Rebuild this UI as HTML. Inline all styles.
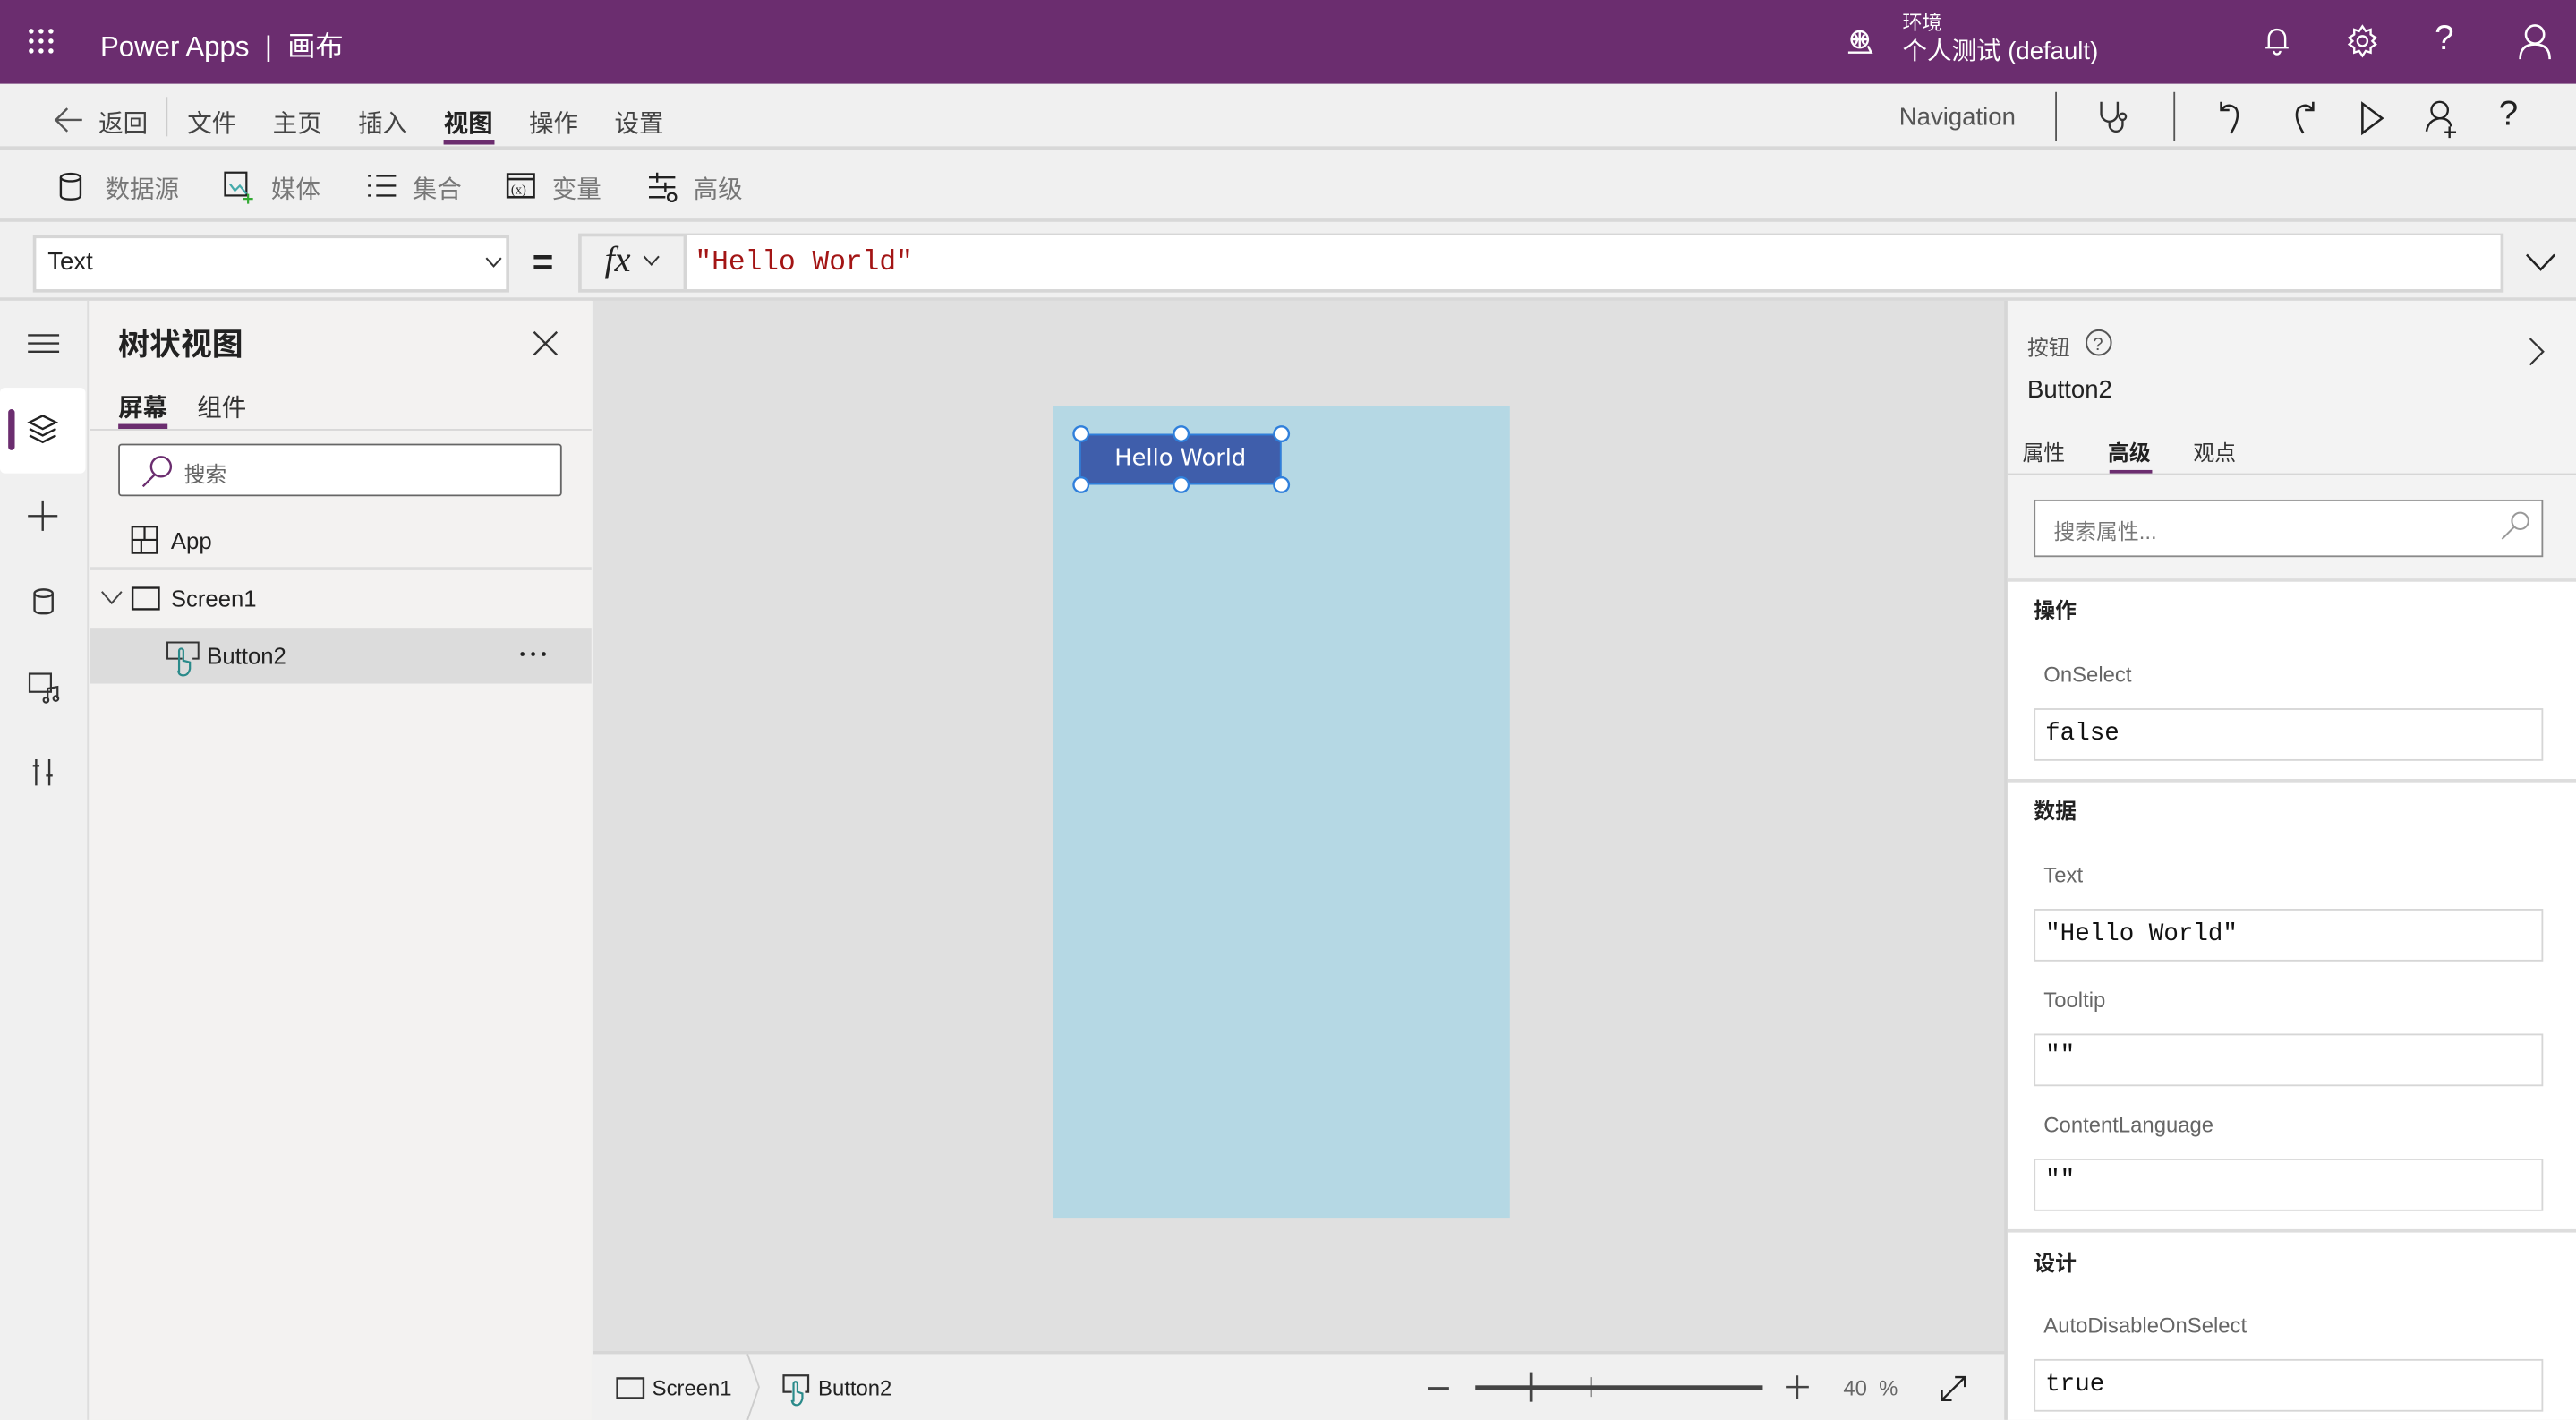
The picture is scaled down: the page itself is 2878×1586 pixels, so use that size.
<!DOCTYPE html>
<html><head><meta charset="utf-8"><style>
*{box-sizing:border-box;margin:0;padding:0}
html,body{width:2878px;height:1586px;overflow:hidden;background:#f0f0f0}
#w{position:absolute;left:0;top:0;width:1568px;height:864px;transform:scale(1.83546);transform-origin:0 0;font-family:"Liberation Sans","Noto Sans CJK SC",sans-serif;color:#333;background:#f0f0f0}
.a{position:absolute}
svg{position:absolute;overflow:visible}
.t{font-size:15px;color:#444}
.g{color:#666}
.mono{font-family:"Liberation Mono","DejaVu Sans Mono",monospace}
</style></head><body><div id="w">
<div class="a" style="left:0;top:0;width:1568px;height:51px;background:#6b2d6f"></div>
<svg style="left:17px;top:17px" width="18" height="18" fill="#fff"><circle cx="2" cy="2" r="1.5"/><circle cx="8" cy="2" r="1.5"/><circle cx="14" cy="2" r="1.5"/><circle cx="2" cy="8" r="1.5"/><circle cx="8" cy="8" r="1.5"/><circle cx="14" cy="8" r="1.5"/><circle cx="2" cy="14" r="1.5"/><circle cx="8" cy="14" r="1.5"/><circle cx="14" cy="14" r="1.5"/></svg>
<div class="a" style="left:61px;top:14px;font-size:17px;color:#fff">Power Apps &nbsp;|&nbsp; 画布</div>
<svg style="left:1124px;top:17px" width="18" height="16" fill="none" stroke="#fff" stroke-width="1.3"><circle cx="8" cy="7" r="5"/><path d="M3 7h10M8 2v10M5 4q3 3 0 6M11 4q-3 3 0 6M1 15h14l-2-4"/></svg>
<div class="a" style="left:1158px;top:5px;font-size:12px;color:#fff">环境</div>
<div class="a" style="left:1158px;top:20px;font-size:15px;color:#fff">个人测试 (default)</div>
<svg style="left:1378px;top:16px" width="16" height="18" fill="none" stroke="#fff" stroke-width="1.3"><path d="M3 13V7a5 5 0 0 1 10 0v6zM1 13h14M6 15a2 2 0 0 0 4 0"/></svg>
<svg style="left:1428px;top:15px" width="20" height="20" fill="none" stroke="#fff" stroke-width="1.3"><circle cx="10" cy="10" r="3"/><path d="M10 1l2 3 3-1 0 3 3 2-2 2 2 2-3 2 0 3-3-1-2 3-2-3-3 1 0-3-3-2 2-2-2-2 3-2 0-3 3 1z"/></svg>
<div class="a" style="left:1482px;top:12px;font-size:21px;color:#fff">?</div>
<svg style="left:1533px;top:14px" width="20" height="22" fill="none" stroke="#fff" stroke-width="1.4"><circle cx="10" cy="7" r="5.5"/><path d="M1 22q0-9 9-9 9 0 9 9"/></svg>

<div class="a" style="left:0;top:51px;width:1568px;height:40px;border-bottom:2px solid #d8d8d8"></div>
<svg style="left:33px;top:65px" width="18" height="16" fill="none" stroke="#555" stroke-width="1.3"><path d="M8 1L1 8l7 7M1 8h16"/></svg>
<div class="a t" style="left:60px;top:64px">返回</div>
<div class="a" style="left:101px;top:59px;width:1px;height:24px;background:#ccc"></div>
<div class="a t" style="left:114px;top:64px">文件</div>
<div class="a t" style="left:166px;top:64px">主页</div>
<div class="a t" style="left:218px;top:64px">插入</div>
<div class="a t" style="left:270px;top:64px;color:#222;font-weight:bold">视图</div>
<div class="a" style="left:270px;top:85px;width:31px;height:3px;background:#6b2d6f"></div>
<div class="a t" style="left:322px;top:64px">操作</div>
<div class="a t" style="left:374px;top:64px">设置</div>
<div class="a t" style="left:1156px;top:63px;color:#555">Navigation</div>
<div class="a" style="left:1251px;top:56px;width:1px;height:30px;background:#555"></div>
<svg style="left:1277px;top:61px" width="22" height="22" fill="none" stroke="#333" stroke-width="1.3"><path d="M2 1v7a5 5 0 0 0 10 0V1M7 13v2a4 4 0 0 0 8 0v-3"/><circle cx="15" cy="10" r="2"/></svg>
<div class="a" style="left:1323px;top:56px;width:1px;height:30px;background:#555"></div>
<svg style="left:1349px;top:60px" width="18" height="24" fill="none" stroke="#222" stroke-width="1.4"><path d="M3 2v5h5M3 7q4-5 9-1 3 5-3 15"/></svg>
<svg style="left:1393px;top:60px" width="18" height="24" fill="none" stroke="#222" stroke-width="1.4"><path d="M15 2v5h-5M15 7q-4-5-9-1-3 5 3 15"/></svg>
<svg style="left:1437px;top:62px" width="14" height="20" fill="none" stroke="#222" stroke-width="1.4"><path d="M1 1v18l12-9z"/></svg>
<svg style="left:1476px;top:60px" width="22" height="24" fill="none" stroke="#222" stroke-width="1.3"><circle cx="9" cy="7" r="5"/><path d="M1 20q1-7 8-8 6 0 7 5M15 17v7M12 20.5h7"/></svg>
<div class="a" style="left:1521px;top:58px;font-size:21px;color:#222">?</div>

<div class="a" style="left:0;top:133px;width:1568px;height:2px;background:#d8d8d8"></div>
<svg style="left:36px;top:105px" width="14" height="17" fill="none" stroke="#222" stroke-width="1.3"><ellipse cx="7" cy="3" rx="6" ry="2.3"/><path d="M1 3v11q0 2.3 6 2.3t6-2.3V3"/></svg>
<div class="a t g" style="left:64px;top:104px;color:#777">数据源</div>
<svg style="left:136px;top:104px" width="18" height="20" fill="none" stroke="#222" stroke-width="1.2"><rect x="1" y="1" width="13" height="14"/><path d="M4 8l3 4 3-3 4 5" stroke="#4aa"/><path d="M15 14v6M12 17h6" stroke="#3a3"/></svg>
<div class="a t" style="left:165px;top:104px;color:#777">媒体</div>
<svg style="left:223px;top:106px" width="18" height="15" fill="none" stroke="#222" stroke-width="1.3"><path d="M1 1h2M6 1h12M1 7h2M6 7h12M1 13h2M6 13h12"/></svg>
<div class="a t" style="left:251px;top:104px;color:#777">集合</div>
<svg style="left:308px;top:105px" width="18" height="16" fill="none" stroke="#222" stroke-width="1.4"><rect x="1" y="1" width="16" height="14"/><path d="M1 4h16"/><text x="3" y="13" font-size="8" fill="#222" stroke="none" font-family="Liberation Serif">(x)</text></svg>
<div class="a t" style="left:336px;top:104px;color:#777">变量</div>
<svg style="left:394px;top:104px" width="18" height="20" fill="none" stroke="#222" stroke-width="1.3"><path d="M1 4h16M1 10h16M1 16h10M6 1v6M11 7v6"/><circle cx="15" cy="16" r="2.5"/></svg>
<div class="a t" style="left:422px;top:104px;color:#777">高级</div>

<div class="a" style="left:20px;top:143px;width:290px;height:35px;background:#fff;border:2px solid #d6d6d6"></div>
<div class="a" style="left:29px;top:151px;font-size:15px;color:#222">Text</div>
<svg style="left:295px;top:156px" width="11" height="7" fill="none" stroke="#333" stroke-width="1.1"><path d="M1 1l4.5 5L10 1"/></svg>
<div class="a" style="left:324px;top:147px;font-size:22px;color:#222;font-weight:bold">=</div>
<div class="a" style="left:352px;top:142px;width:1172px;height:36px;background:#f0f0f0;border:2px solid #d6d6d6"></div>
<div class="a" style="left:416px;top:143px;width:1106px;height:33px;background:#fff;border-left:2px solid #d6d6d6"></div>
<div class="a" style="left:368px;top:145px;font-size:22px;font-style:italic;font-family:'Liberation Serif',serif;color:#222">fx</div>
<svg style="left:391px;top:155px" width="11" height="7" fill="none" stroke="#333" stroke-width="1.1"><path d="M1 1l4.5 5L10 1"/></svg>
<div class="a mono" style="left:423px;top:151px;font-size:17px;color:#a31515">"Hello World"</div>
<svg style="left:1537px;top:154px" width="19" height="11" fill="none" stroke="#222" stroke-width="1.4"><path d="M1 1l8.5 9L18 1"/></svg>
<div class="a" style="left:0;top:181px;width:1568px;height:2px;background:#d8d8d8"></div>

<div class="a" style="left:0;top:183px;width:54px;height:681px;background:#f0f0f0;border-right:1px solid #ddd"></div>
<svg style="left:17px;top:203px" width="19" height="12" stroke="#333" stroke-width="1.3"><path d="M0 1h19M0 6h19M0 11h19"/></svg>
<div class="a" style="left:0;top:236px;width:52px;height:52px;background:#fff;border-radius:3px"></div>
<div class="a" style="left:5px;top:249px;width:4px;height:25px;background:#6b2d6f;border-radius:2px"></div>
<svg style="left:17px;top:252px" width="18" height="18" fill="none" stroke="#222" stroke-width="1.3"><path d="M9 1l8 4-8 4-8-4zM1 9l8 4 8-4M1 13l8 4 8-4"/></svg>
<svg style="left:17px;top:305px" width="18" height="18" stroke="#333" stroke-width="1.3"><path d="M9 0v18M0 9h18"/></svg>
<svg style="left:20px;top:358px" width="13" height="16" fill="none" stroke="#333" stroke-width="1.3"><ellipse cx="6.5" cy="3" rx="5.5" ry="2.3"/><path d="M1 3v10q0 2.3 5.5 2.3t5.5-2.3V3"/></svg>
<svg style="left:17px;top:409px" width="20" height="18" fill="none" stroke="#333" stroke-width="1.2"><rect x="1" y="1" width="13" height="11"/><path d="M12 17v-7l6-1v7"/><circle cx="11" cy="17" r="1.5"/><circle cx="17" cy="16" r="1.5"/></svg>
<svg style="left:19px;top:461px" width="14" height="18" fill="none" stroke="#333" stroke-width="1.3"><path d="M3 1v16M11 1v16M1 5h4M9 11h4"/></svg>

<div class="a" style="left:55px;top:183px;width:305px;height:681px;background:#f3f2f1"></div>
<div class="a" style="left:72px;top:195px;font-size:19px;font-weight:bold;color:#222">树状视图</div>
<svg style="left:325px;top:202px" width="14" height="14" stroke="#333" stroke-width="1.3"><path d="M0 0l14 14M14 0L0 14"/></svg>
<div class="a" style="left:72px;top:237px;font-size:15px;font-weight:bold;color:#222">屏幕</div>
<div class="a" style="left:72px;top:258px;width:30px;height:3px;background:#6b2d6f"></div>
<div class="a" style="left:120px;top:237px;font-size:15px;color:#333">组件</div>
<div class="a" style="left:55px;top:261px;width:305px;height:1px;background:#d6d6d6"></div>
<div class="a" style="left:72px;top:270px;width:270px;height:32px;background:#fff;border:1px solid #666;border-radius:2px"></div>
<svg style="left:86px;top:277px" width="20" height="20" fill="none" stroke="#6b2d6f" stroke-width="1.3"><circle cx="12" cy="7" r="6"/><path d="M8 12L1 19"/></svg>
<div class="a" style="left:112px;top:278px;font-size:13px;color:#666">搜索</div>
<svg style="left:80px;top:320px" width="16" height="18" fill="none" stroke="#222" stroke-width="1.2"><rect x="0.5" y="0.5" width="15" height="16"/><path d="M0.5 8.5h15M8 0.5v8M6 8.5v8"/></svg>
<div class="a" style="left:104px;top:321px;font-size:14px;color:#222">App</div>
<div class="a" style="left:55px;top:345px;width:305px;height:2px;background:#ddd"></div>
<svg style="left:61px;top:359px" width="14" height="9" fill="none" stroke="#444" stroke-width="1.1"><path d="M1 1l6 7 6-7"/></svg>
<svg style="left:80px;top:357px" width="18" height="15" fill="none" stroke="#222" stroke-width="1.3"><rect x="0.7" y="0.7" width="16" height="13"/></svg>
<div class="a" style="left:104px;top:356px;font-size:14px;color:#222">Screen1</div>
<div class="a" style="left:55px;top:382px;width:305px;height:34px;background:#dcdcdc"></div>
<svg style="left:101px;top:390px" width="20" height="22" fill="none" stroke-width="1.2"><path d="M11 12H1V1h21v11h-4" stroke="#333" transform="scale(.9)"/><path d="M8 19V6a1.3 1.3 0 0 1 2.6 0v6l4 1v4q-1 4-4 4t-3-3" stroke="#2a8a8a"/></svg>
<div class="a" style="left:126px;top:391px;font-size:14px;color:#222">Button2</div>
<svg style="left:316px;top:396px" width="18" height="4" fill="#222"><circle cx="2" cy="2" r="1.3"/><circle cx="8.5" cy="2" r="1.3"/><circle cx="15" cy="2" r="1.3"/></svg>

<div class="a" style="left:361px;top:183px;width:860px;height:640px;background:#e0e0e0"></div>
<div class="a" style="left:641px;top:247px;width:278px;height:494px;background:#b5d8e4"></div>
<div class="a" style="left:657px;top:264px;width:123px;height:31px;background:#3f5eab;border:1.5px solid #2f7fdb"></div>
<div class="a" style="left:657px;top:271px;width:123px;text-align:center;font-size:14px;color:#fff;font-family:'DejaVu Sans','Liberation Sans',sans-serif">Hello World</div>
<svg style="left:652px;top:259px" width="134" height="41" fill="#fff" stroke="#2f7fdb" stroke-width="1.3"><circle cx="6" cy="5" r="4.5"/><circle cx="67" cy="5" r="4.5"/><circle cx="128" cy="5" r="4.5"/><circle cx="6" cy="36" r="4.5"/><circle cx="67" cy="36" r="4.5"/><circle cx="128" cy="36" r="4.5"/></svg>

<div class="a" style="left:361px;top:822px;width:860px;height:42px;background:#f0f0f0;border-top:2px solid #d6d6d6"></div>
<svg style="left:452px;top:824px" width="12" height="40" fill="none" stroke="#ccc"><path d="M3 0l7 20-7 20"/></svg>
<svg style="left:375px;top:838px" width="18" height="14" fill="none" stroke="#333" stroke-width="1.3"><rect x="0.7" y="0.7" width="16" height="12"/></svg>
<div class="a" style="left:397px;top:837px;font-size:13px;color:#222">Screen1</div>
<svg style="left:476px;top:836px" width="18" height="20" fill="none" stroke-width="1.2"><path d="M6 11H1V1h15v10h-2" stroke="#333"/><path d="M7 17V6a1.2 1.2 0 0 1 2.4 0v5l3 1v3q-1 4-3.5 4T6 16" stroke="#2a8a8a"/></svg>
<div class="a" style="left:498px;top:837px;font-size:13px;color:#222">Button2</div>
<div class="a" style="left:869px;top:844px;width:13px;height:1.5px;background:#444"></div>
<div class="a" style="left:898px;top:843px;width:175px;height:3px;background:#444"></div>
<div class="a" style="left:931px;top:835px;width:2px;height:18px;background:#444"></div>
<div class="a" style="left:968px;top:838px;width:1px;height:12px;background:#444"></div>
<svg style="left:1087px;top:837px" width="14" height="14" stroke="#444" stroke-width="1.3"><path d="M7 0v14M0 7h14"/></svg>
<div class="a" style="left:1122px;top:837px;font-size:13px;color:#666">40 &nbsp;%</div>
<svg style="left:1181px;top:837px" width="16" height="16" fill="none" stroke="#222" stroke-width="1.3"><path d="M1 15L15 1M1 9v6h6M15 7V1H9"/></svg>

<div class="a" style="left:1220px;top:183px;width:2px;height:681px;background:#d6d6d6"></div>
<div class="a" style="left:1222px;top:183px;width:346px;height:170px;background:#f3f3f3"></div>
<div class="a" style="left:1234px;top:201px;font-size:13px;color:#555">按钮</div>
<svg style="left:1269px;top:200px" width="17" height="17" fill="none" stroke="#555" stroke-width="1.1"><circle cx="8.5" cy="8.5" r="7.5"/><text x="5" y="13" font-size="11" fill="#555" stroke="none" font-family="Liberation Sans">?</text></svg>
<svg style="left:1539px;top:205px" width="10" height="18" fill="none" stroke="#333" stroke-width="1.2"><path d="M1 1l8 8-8 8"/></svg>
<div class="a" style="left:1234px;top:229px;font-size:15px;color:#222">Button2</div>
<div class="a" style="left:1231px;top:265px;font-size:13px;color:#333">属性</div>
<div class="a" style="left:1283px;top:265px;font-size:13px;color:#222;font-weight:bold">高级</div>
<div class="a" style="left:1335px;top:265px;font-size:13px;color:#333">观点</div>
<div class="a" style="left:1284px;top:286px;width:26px;height:3px;background:#6b2d6f"></div>
<div class="a" style="left:1222px;top:288px;width:346px;height:1px;background:#d6d6d6"></div>
<div class="a" style="left:1238px;top:304px;width:310px;height:35px;background:#fff;border:1.5px solid #8a8a8a"></div>
<div class="a" style="left:1250px;top:313px;font-size:13px;color:#777">搜索属性...</div>
<svg style="left:1522px;top:311px" width="18" height="18" fill="none" stroke="#999" stroke-width="1.1"><circle cx="12" cy="6" r="5"/><path d="M8.5 9.5L1 17"/></svg>
<div class="a" style="left:1222px;top:352px;width:346px;height:512px;background:#fff"></div>
<div class="a" style="left:1222px;top:352px;width:346px;height:2px;background:#ddd"></div>
<div class="a" style="left:1238px;top:361px;font-size:13px;font-weight:bold;color:#222">操作</div>
<div class="a" style="left:1244px;top:403px;font-size:13px;color:#666">OnSelect</div>
<div class="a" style="left:1238px;top:431px;width:310px;height:32px;border:1.5px solid #d6d6d6"></div>
<div class="a mono" style="left:1245px;top:438px;font-size:15px;color:#111">false</div>
<div class="a" style="left:1222px;top:474px;width:346px;height:2px;background:#ddd"></div>
<div class="a" style="left:1238px;top:483px;font-size:13px;font-weight:bold;color:#222">数据</div>
<div class="a" style="left:1244px;top:525px;font-size:13px;color:#666">Text</div>
<div class="a" style="left:1238px;top:553px;width:310px;height:32px;border:1.5px solid #d6d6d6"></div>
<div class="a mono" style="left:1245px;top:560px;font-size:15px;color:#111">"Hello World"</div>
<div class="a" style="left:1244px;top:601px;font-size:13px;color:#666">Tooltip</div>
<div class="a" style="left:1238px;top:629px;width:310px;height:32px;border:1.5px solid #d6d6d6"></div>
<div class="a mono" style="left:1245px;top:634px;font-size:15px;color:#111">""</div>
<div class="a" style="left:1244px;top:677px;font-size:13px;color:#666">ContentLanguage</div>
<div class="a" style="left:1238px;top:705px;width:310px;height:32px;border:1.5px solid #d6d6d6"></div>
<div class="a mono" style="left:1245px;top:710px;font-size:15px;color:#111">""</div>
<div class="a" style="left:1222px;top:748px;width:346px;height:2px;background:#ddd"></div>
<div class="a" style="left:1238px;top:758px;font-size:13px;font-weight:bold;color:#222">设计</div>
<div class="a" style="left:1244px;top:799px;font-size:13px;color:#666">AutoDisableOnSelect</div>
<div class="a" style="left:1238px;top:827px;width:310px;height:32px;border:1.5px solid #d6d6d6"></div>
<div class="a mono" style="left:1245px;top:834px;font-size:15px;color:#111">true</div>
</div></body></html>
